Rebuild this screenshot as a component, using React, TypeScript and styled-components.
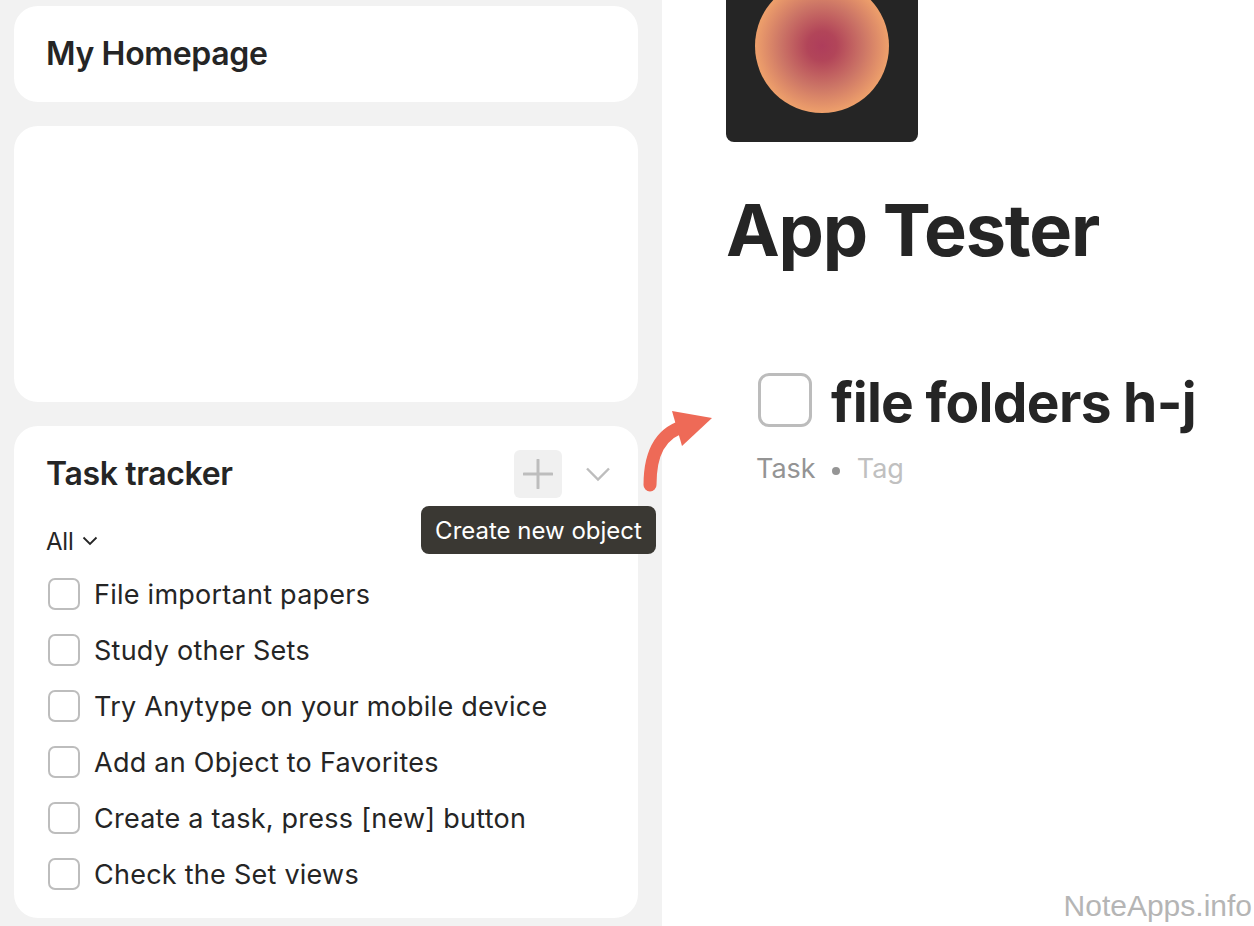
import React from "react";
import styled, { createGlobalStyle } from "styled-components";

const GlobalStyle = createGlobalStyle`
  html, body {
    margin: 0;
    padding: 0;
    height: 100%;
    overflow: hidden;
    background: #fff;
  }
  * {
    box-sizing: border-box;
  }
`;

const Page = styled.div`
  position: relative;
  width: 1254px;
  height: 926px;
  display: flex;
  overflow: hidden;
  font-family: Inter, "Liberation Sans", sans-serif;
  color: #252525;
`;

const Sidebar = styled.aside`
  width: 662px;
  height: 926px;
  flex-shrink: 0;
  background: #f2f2f2;
  padding: 6px 24px 8px 14px;
  display: flex;
  flex-direction: column;
  gap: 24px;
`;

const Card = styled.section<{ $height: number }>`
  height: ${({ $height }) => $height}px;
  background: #fff;
  border-radius: 24px;
`;

const HomeCard = styled(Card)`
  display: flex;
  align-items: center;
  padding-left: 32px;
`;

const CardTitle = styled.h2`
  margin: 0;
  font-size: 32px;
  line-height: 36px;
  font-weight: 600;
  letter-spacing: -0.35px;
`;

const TaskCard = styled(Card)`
  padding: 24px 26px 0 32px;
`;

const TaskHeader = styled.div`
  height: 48px;
  display: flex;
  align-items: center;
`;

const HeaderActions = styled.div`
  margin-left: auto;
  display: flex;
  align-items: center;
  gap: 22px;
`;

const AddButton = styled.div`
  width: 48px;
  height: 48px;
  border-radius: 6px;
  background: #f0f0f0;
  display: flex;
  align-items: center;
  justify-content: center;
`;

const CollapseButton = styled.div`
  width: 28px;
  height: 48px;
  display: flex;
  align-items: center;
  justify-content: center;
`;

const FilterRow = styled.div`
  margin-top: 29px;
  height: 28px;
  display: flex;
  align-items: center;
  gap: 8px;
  font-size: 24px;
  letter-spacing: -0.2px;
`;

const TaskList = styled.ul`
  list-style: none;
  margin: 11px 0 0;
  padding: 0;
`;

const TaskRow = styled.li`
  height: 56px;
  display: flex;
  align-items: center;
  gap: 14px;
  padding-left: 2px;
  font-size: 27px;
  letter-spacing: 0.25px;
`;

const Checkbox = styled.span`
  width: 32px;
  height: 32px;
  flex-shrink: 0;
  border: 2px solid #bdbdbd;
  border-radius: 7px;
`;

const Main = styled.main`
  flex: 1;
  padding-left: 64px;
`;

const Cover = styled.div`
  width: 192px;
  height: 192px;
  margin-top: -50px;
  border-radius: 8px;
  background: #252525;
  display: flex;
  align-items: center;
  justify-content: center;
`;

const CoverCircle = styled.div`
  width: 134px;
  height: 134px;
  border-radius: 50%;
  background: radial-gradient(circle closest-side, #ae3d5b 0%, #b24559 22%, #cc7566 62%, #eea06b 100%);
`;

const Title = styled.h1`
  margin: 45px 0 0;
  font-size: 72px;
  line-height: 86px;
  font-weight: 700;
  letter-spacing: -1.2px;
`;

const ObjectBlock = styled.div`
  margin-top: 95px;
  padding-left: 32px;
`;

const ObjectHeader = styled.div`
  display: flex;
  align-items: center;
  gap: 19px;
  height: 64px;
`;

const ObjectCheckbox = styled.span`
  width: 54px;
  height: 54px;
  flex-shrink: 0;
  border: 3px solid #bcbcbc;
  border-radius: 11px;
`;

const ObjectTitle = styled.div`
  padding-top: 4px;
  font-size: 55px;
  line-height: 64px;
  font-weight: 700;
  letter-spacing: -0.68px;
  white-space: nowrap;
`;

const MetaRow = styled.div`
  margin-top: 20px;
  display: flex;
  align-items: center;
  font-size: 27px;
  line-height: 34px;
`;

const MetaType = styled.span`
  margin-left: -2px;
  color: #949494;
`;

const MetaDot = styled.span`
  width: 8px;
  height: 8px;
  margin: 3px 17px 0 16px;
  border-radius: 50%;
  background: #959595;
`;

const MetaTag = styled.span`
  color: #c0c0c0;
`;

const Tooltip = styled.div`
  position: absolute;
  left: 421px;
  top: 506px;
  width: 235px;
  height: 48px;
  border-radius: 8px;
  background: #3a3833;
  color: #fff;
  display: flex;
  align-items: center;
  justify-content: center;
  font-size: 24px;
`;

const ArrowMark = styled.svg`
  position: absolute;
  left: 636px;
  top: 404px;
`;

const Watermark = styled.div`
  position: absolute;
  right: 2px;
  bottom: 2px;
  color: #b5b5b5;
  font-family: "Liberation Sans", Arial, sans-serif;
  font-size: 30px;
  line-height: 36px;
`;

const tasks = [
  "File important papers",
  "Study other Sets",
  "Try Anytype on your mobile device",
  "Add an Object to Favorites",
  "Create a task, press [new] button",
  "Check the Set views",
];

export default function App() {
  return (
    <>
      <GlobalStyle />
      <Page>
        <Sidebar>
          <HomeCard $height={96}>
            <CardTitle>My Homepage</CardTitle>
          </HomeCard>
          <Card $height={276} />
          <TaskCard $height={492}>
            <TaskHeader>
              <CardTitle>Task tracker</CardTitle>
              <HeaderActions>
                <AddButton>
                  <svg width="30" height="30" viewBox="0 0 30 30" fill="none">
                    <path d="M15 1v28M1 15h28" stroke="#bdbdbd" strokeWidth="3" strokeLinecap="round" />
                  </svg>
                </AddButton>
                <CollapseButton>
                  <svg width="26" height="16" viewBox="0 0 26 16" fill="none">
                    <path d="M2 2.5 13 13.5 24 2.5" stroke="#bdbdbd" strokeWidth="2.4" />
                  </svg>
                </CollapseButton>
              </HeaderActions>
            </TaskHeader>
            <FilterRow>
              All
              <svg width="16" height="10" viewBox="0 0 16 10" fill="none">
                <path d="M1.5 1.5 8 8l6.5-6.5" stroke="#252525" strokeWidth="1.8" />
              </svg>
            </FilterRow>
            <TaskList>
              {tasks.map((task) => (
                <TaskRow key={task}>
                  <Checkbox />
                  {task}
                </TaskRow>
              ))}
            </TaskList>
          </TaskCard>
        </Sidebar>
        <Main>
          <Cover>
            <CoverCircle />
          </Cover>
          <Title>App Tester</Title>
          <ObjectBlock>
            <ObjectHeader>
              <ObjectCheckbox />
              <ObjectTitle>file folders h-j</ObjectTitle>
            </ObjectHeader>
            <MetaRow>
              <MetaType>Task</MetaType>
              <MetaDot />
              <MetaTag>Tag</MetaTag>
            </MetaRow>
          </ObjectBlock>
        </Main>
        <ArrowMark width="80" height="90" viewBox="0 0 80 90" fill="none">
          <path d="M14 81C14 52 22 28 52 21" stroke="#ee6a57" strokeWidth="13" strokeLinecap="round" />
          <path d="M36 7 76 14 46 42Z" fill="#ee6a57" />
        </ArrowMark>
        <Tooltip>Create new object</Tooltip>
        <Watermark>NoteApps.info</Watermark>
      </Page>
    </>
  );
}
